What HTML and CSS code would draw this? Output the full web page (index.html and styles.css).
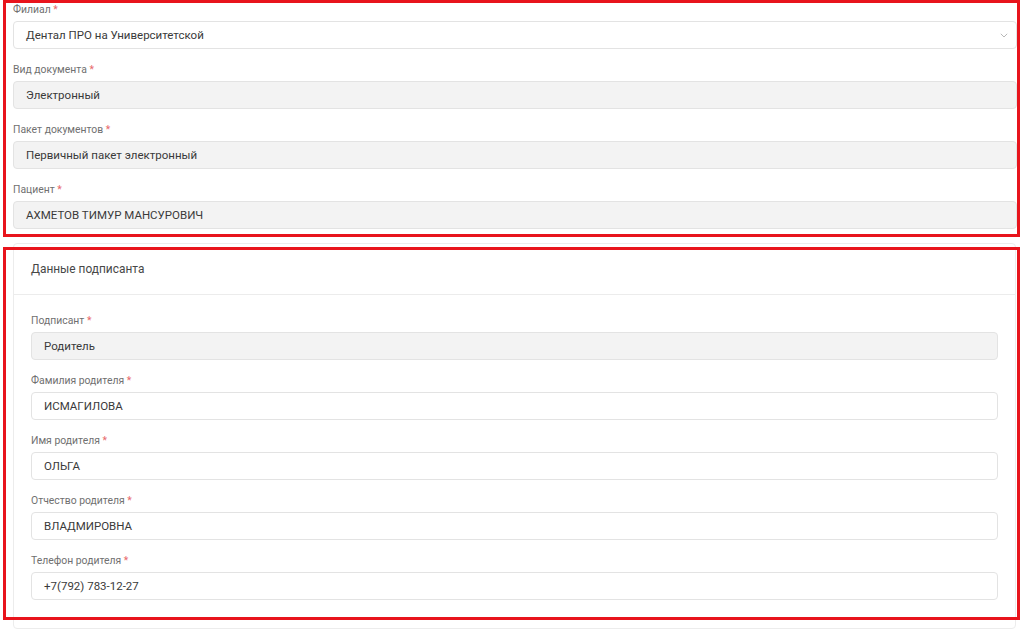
FILE: index.html
```html
<!DOCTYPE html>
<html lang="ru">
<head>
<meta charset="utf-8">
<title>Подписание документов</title>
<link rel="stylesheet" href="styles.css">
</head>
<body>
<div class="page">
  <section class="form-top">
    <div class="field">
      <label class="label">Филиал <span class="req">*</span></label>
      <div class="input select">
        <span>Дентал ПРО на Университетской</span>
        <svg class="chevron" width="8" height="5" viewBox="0 0 8 5"><path d="M0.8 0.8l3.2 3.2 3.2-3.2" fill="none" stroke="#b8b8b8" stroke-width="1"/></svg>
      </div>
    </div>
    <div class="field">
      <label class="label">Вид документа <span class="req">*</span></label>
      <div class="input disabled">Электронный</div>
    </div>
    <div class="field">
      <label class="label">Пакет документов <span class="req">*</span></label>
      <div class="input disabled">Первичный пакет электронный</div>
    </div>
    <div class="field">
      <label class="label">Пациент <span class="req">*</span></label>
      <div class="input disabled">АХМЕТОВ ТИМУР МАНСУРОВИЧ</div>
    </div>
  </section>

  <section class="card">
    <div class="card-header">Данные подписанта</div>
    <div class="card-body">
      <div class="field">
        <label class="label">Подписант <span class="req">*</span></label>
        <div class="input disabled">Родитель</div>
      </div>
      <div class="field">
        <label class="label">Фамилия родителя <span class="req">*</span></label>
        <div class="input">ИСМАГИЛОВА</div>
      </div>
      <div class="field">
        <label class="label">Имя родителя <span class="req">*</span></label>
        <div class="input">ОЛЬГА</div>
      </div>
      <div class="field">
        <label class="label">Отчество родителя <span class="req">*</span></label>
        <div class="input">ВЛАДМИРОВНА</div>
      </div>
      <div class="field">
        <label class="label">Телефон родителя <span class="req">*</span></label>
        <div class="input">+7(792) 783-12-27</div>
      </div>
    </div>
  </section>
</div>

<div class="mark mark-top"></div>
<div class="mark mark-bottom"></div>
</body>
</html>
```

FILE: styles.css
```css
* {
  box-sizing: border-box;
}

html, body {
  margin: 0;
  padding: 0;
  background: #ffffff;
}

body {
  font-family: Roboto, "Noto Sans", sans-serif;
  color: #3a3a3a;
  width: 1024px;
  height: 635px;
  overflow: hidden;
  position: relative;
}

.page {
  padding: 3px 7px 0 13px;
}

.field {
  margin-bottom: 14px;
}

.label {
  display: block;
  font-size: 10.4px;
  line-height: 14px;
  color: #707070;
  margin-bottom: 4px;
}

.req {
  color: #e8696b;
}

.input {
  height: 28px;
  border: 1px solid #e3e3e3;
  border-radius: 4px;
  padding: 0 12px;
  font-size: 11.5px;
  line-height: 26px;
  color: #3a3a3a;
  background: #ffffff;
}

.input.disabled {
  background: #f3f3f3;
}

.select {
  display: flex;
  align-items: center;
  justify-content: space-between;
}

.chevron {
  margin-right: -4px;
}

.form-top .field:last-child {
  margin-bottom: 0;
}

.card {
  margin-top: 14px;
  border: 1px solid #ececec;
  border-radius: 4px;
  width: 1003px;
}

.card-header {
  height: 51px;
  padding: 0 17px;
  font-size: 11.9px;
  line-height: 50px;
  color: #474747;
  border-bottom: 1px solid #ececec;
}

.card-body {
  padding: 19px 17px 14px 17px;
}

/* red outline frames drawn over the two form blocks */
.mark {
  position: absolute;
  border: 3px solid #e8141c;
  pointer-events: none;
}

.mark-top {
  left: 3px;
  top: 0;
  width: 1017px;
  height: 237px;
}

.mark-bottom {
  left: 3px;
  top: 247px;
  width: 1017px;
  height: 373px;
}
```
